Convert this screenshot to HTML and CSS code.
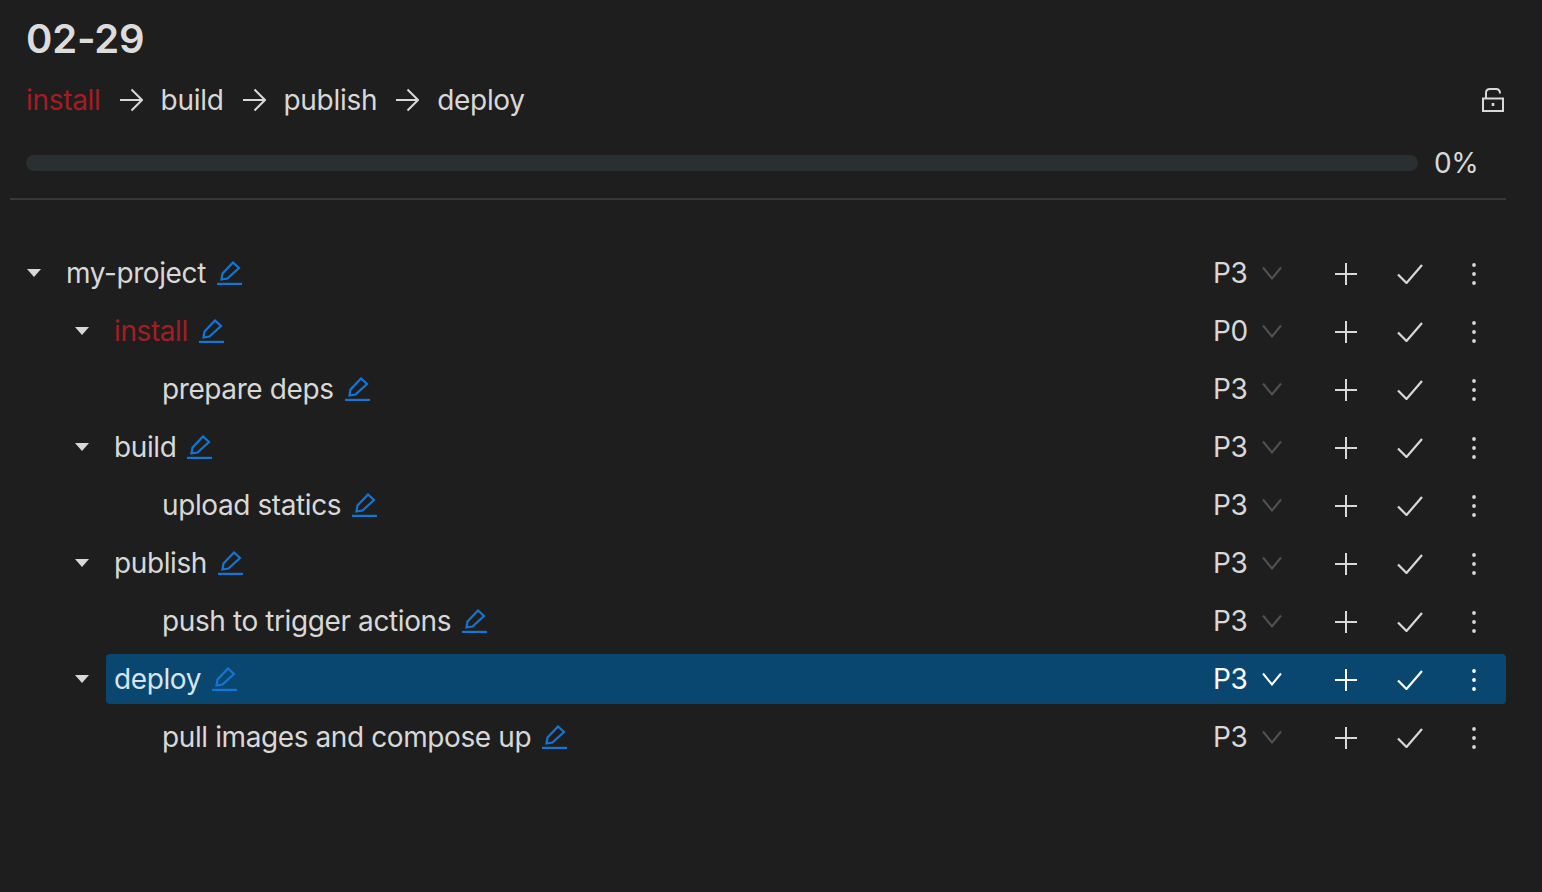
FILE: index.html
```html
<!DOCTYPE html>
<html>
<head>
  <title>02-29</title>
  <link rel="stylesheet" href="styles.css">
</head>
<body>
  <svg class="sprites" width="0" height="0">
    <symbol id="i-arrow" viewBox="0 0 24 24"><path d="M1 12H23M12.5 1.5L23 12L12.5 22.5" fill="none" stroke="currentColor" stroke-width="2"/></symbol>
    <symbol id="i-lock" viewBox="0 0 24 24"><path d="M3 10.5H23V23H3ZM6 10V5Q6 1 10 1H16Q20 1 20 5.5" fill="none" stroke="currentColor" stroke-width="2"/><path d="M13 15V18" stroke="currentColor" stroke-width="2.6"/></symbol>
    <symbol id="i-chevron" viewBox="0 0 20 14"><path d="M1 1.5L10 12.5L19 1.5" fill="none" stroke="currentColor" stroke-width="2"/></symbol>
    <symbol id="i-plus" viewBox="0 0 22 22"><path d="M0 11H22M11 0V22" fill="none" stroke="currentColor" stroke-width="2"/></symbol>
    <symbol id="i-check" viewBox="0 0 26 20"><path d="M1 10.5L9.5 19L25 1" fill="none" stroke="currentColor" stroke-width="2.2"/></symbol>
    <symbol id="i-dots" viewBox="0 0 4 24"><circle cx="2" cy="3" r="1.9" fill="currentColor"/><circle cx="2" cy="12" r="1.9" fill="currentColor"/><circle cx="2" cy="21" r="1.9" fill="currentColor"/></symbol>
    <symbol id="i-pencil" viewBox="0 0 25 24"><path d="M0 23H25" stroke="currentColor" stroke-width="2.4"/><path d="M4.5 18.5L5.5 12.5L16 1.5L22 7L10.5 17.5Z" fill="none" stroke="currentColor" stroke-width="2.2"/></symbol>
    <symbol id="i-caret" viewBox="0 0 14 8"><path d="M0 0H14L7 8Z" fill="currentColor"/></symbol>
  </svg>

  <div class="page">
    <header class="head">
      <h1>02-29</h1>
      <div class="flow">
        <span class="stage failed">install</span>
        <svg class="arrow"><use href="#i-arrow"/></svg>
        <span class="stage">build</span>
        <svg class="arrow"><use href="#i-arrow"/></svg>
        <span class="stage">publish</span>
        <svg class="arrow"><use href="#i-arrow"/></svg>
        <span class="stage">deploy</span>
        <svg class="lock"><use href="#i-lock"/></svg>
      </div>
      <div class="progress">
        <div class="track"></div>
        <span class="percent">0%</span>
      </div>
    </header>

    <div class="tree">
      <div class="node depth-0">
        <svg class="caret"><use href="#i-caret"/></svg>
        <div class="row">
          <span class="name">my-project</span>
          <svg class="pencil"><use href="#i-pencil"/></svg>
          <div class="priority"><span>P3</span><svg class="chevron"><use href="#i-chevron"/></svg></div>
          <span class="action"><svg class="plus"><use href="#i-plus"/></svg></span>
          <span class="action"><svg class="check"><use href="#i-check"/></svg></span>
          <span class="action"><svg class="dots"><use href="#i-dots"/></svg></span>
        </div>
      </div>

      <div class="node depth-1">
        <svg class="caret"><use href="#i-caret"/></svg>
        <div class="row">
          <span class="name failed">install</span>
          <svg class="pencil"><use href="#i-pencil"/></svg>
          <div class="priority"><span>P0</span><svg class="chevron"><use href="#i-chevron"/></svg></div>
          <span class="action"><svg class="plus"><use href="#i-plus"/></svg></span>
          <span class="action"><svg class="check"><use href="#i-check"/></svg></span>
          <span class="action"><svg class="dots"><use href="#i-dots"/></svg></span>
        </div>
      </div>

      <div class="node depth-2">
        <div class="row">
          <span class="name">prepare deps</span>
          <svg class="pencil"><use href="#i-pencil"/></svg>
          <div class="priority"><span>P3</span><svg class="chevron"><use href="#i-chevron"/></svg></div>
          <span class="action"><svg class="plus"><use href="#i-plus"/></svg></span>
          <span class="action"><svg class="check"><use href="#i-check"/></svg></span>
          <span class="action"><svg class="dots"><use href="#i-dots"/></svg></span>
        </div>
      </div>

      <div class="node depth-1">
        <svg class="caret"><use href="#i-caret"/></svg>
        <div class="row">
          <span class="name">build</span>
          <svg class="pencil"><use href="#i-pencil"/></svg>
          <div class="priority"><span>P3</span><svg class="chevron"><use href="#i-chevron"/></svg></div>
          <span class="action"><svg class="plus"><use href="#i-plus"/></svg></span>
          <span class="action"><svg class="check"><use href="#i-check"/></svg></span>
          <span class="action"><svg class="dots"><use href="#i-dots"/></svg></span>
        </div>
      </div>

      <div class="node depth-2">
        <div class="row">
          <span class="name">upload statics</span>
          <svg class="pencil"><use href="#i-pencil"/></svg>
          <div class="priority"><span>P3</span><svg class="chevron"><use href="#i-chevron"/></svg></div>
          <span class="action"><svg class="plus"><use href="#i-plus"/></svg></span>
          <span class="action"><svg class="check"><use href="#i-check"/></svg></span>
          <span class="action"><svg class="dots"><use href="#i-dots"/></svg></span>
        </div>
      </div>

      <div class="node depth-1">
        <svg class="caret"><use href="#i-caret"/></svg>
        <div class="row">
          <span class="name">publish</span>
          <svg class="pencil"><use href="#i-pencil"/></svg>
          <div class="priority"><span>P3</span><svg class="chevron"><use href="#i-chevron"/></svg></div>
          <span class="action"><svg class="plus"><use href="#i-plus"/></svg></span>
          <span class="action"><svg class="check"><use href="#i-check"/></svg></span>
          <span class="action"><svg class="dots"><use href="#i-dots"/></svg></span>
        </div>
      </div>

      <div class="node depth-2">
        <div class="row">
          <span class="name">push to trigger actions</span>
          <svg class="pencil"><use href="#i-pencil"/></svg>
          <div class="priority"><span>P3</span><svg class="chevron"><use href="#i-chevron"/></svg></div>
          <span class="action"><svg class="plus"><use href="#i-plus"/></svg></span>
          <span class="action"><svg class="check"><use href="#i-check"/></svg></span>
          <span class="action"><svg class="dots"><use href="#i-dots"/></svg></span>
        </div>
      </div>

      <div class="node depth-1">
        <svg class="caret"><use href="#i-caret"/></svg>
        <div class="row selected">
          <span class="name">deploy</span>
          <svg class="pencil"><use href="#i-pencil"/></svg>
          <div class="priority"><span>P3</span><svg class="chevron"><use href="#i-chevron"/></svg></div>
          <span class="action"><svg class="plus"><use href="#i-plus"/></svg></span>
          <span class="action"><svg class="check"><use href="#i-check"/></svg></span>
          <span class="action"><svg class="dots"><use href="#i-dots"/></svg></span>
        </div>
      </div>

      <div class="node depth-2">
        <div class="row">
          <span class="name">pull images and compose up</span>
          <svg class="pencil"><use href="#i-pencil"/></svg>
          <div class="priority"><span>P3</span><svg class="chevron"><use href="#i-chevron"/></svg></div>
          <span class="action"><svg class="plus"><use href="#i-plus"/></svg></span>
          <span class="action"><svg class="check"><use href="#i-check"/></svg></span>
          <span class="action"><svg class="dots"><use href="#i-dots"/></svg></span>
        </div>
      </div>
    </div>
  </div>
</body>
</html>
```

FILE: styles.css
```css
body {
  font-family: Inter, "Liberation Sans", sans-serif;
  font-size: 28px;
  letter-spacing: -0.4px;
  background-color: #1e1e1e;
  color: #d8d8d8;
  margin: 0;
  min-height: 892px;
  overflow: hidden;
}

.sprites {
  position: absolute;
}

.page {
  padding: 0 36px 0 10px;
}

.head {
  padding: 15px 0 0 16px;
  height: 183px;
  border-bottom: 2px solid #383838;
}

h1 {
  color: #dcdcdc;
  font-size: 40px;
  font-weight: 600;
  letter-spacing: -0.2px;
  line-height: 48px;
  margin: 0;
}

.flow {
  display: flex;
  align-items: center;
  height: 50px;
  margin-top: 12px;
  letter-spacing: -0.3px;
}

.failed {
  color: #a31d24;
}

.arrow {
  width: 24px;
  height: 24px;
  margin: 0 18px;
}

.lock {
  width: 24px;
  height: 24px;
  margin-left: auto;
  margin-right: 2px;
}

.progress {
  display: flex;
  align-items: center;
  height: 40px;
  margin-top: 18px;
}

.track {
  flex: 1;
  height: 16px;
  border-radius: 8px;
  background-color: #2a2f31;
}

.percent {
  width: 72px;
  margin-left: 16px;
}

.tree {
  margin-top: 48px;
}

.node {
  display: flex;
  align-items: center;
  height: 50px;
  margin-bottom: 8px;
}

.depth-1 {
  padding-left: 48px;
}

.depth-2 {
  padding-left: 144px;
}

.caret {
  flex: none;
  width: 14px;
  height: 8px;
  margin: 0 17px;
}

.row {
  flex: 1;
  display: flex;
  align-items: center;
  height: 50px;
  padding-left: 8px;
  border-radius: 4px;
}

.row.selected {
  background-color: #094771;
  color: #ffffff;
}

.row.selected .name {
  color: #d7e4ee;
}

.pencil {
  width: 25px;
  height: 24px;
  margin-left: 11px;
  margin-right: auto;
  color: #1177d6;
}

.priority {
  display: flex;
  align-items: center;
  width: 101px;
}

.priority span {
  width: 34px;
}

.chevron {
  width: 20px;
  height: 14px;
  margin-left: 15px;
  color: #525252;
}

.selected .chevron {
  color: #ffffff;
}

.action {
  display: flex;
  align-items: center;
  justify-content: center;
  width: 64px;
  padding-top: 2px;
}

.plus {
  width: 22px;
  height: 22px;
}

.check {
  width: 26px;
  height: 20px;
}

.dots {
  width: 4px;
  height: 24px;
}
```
